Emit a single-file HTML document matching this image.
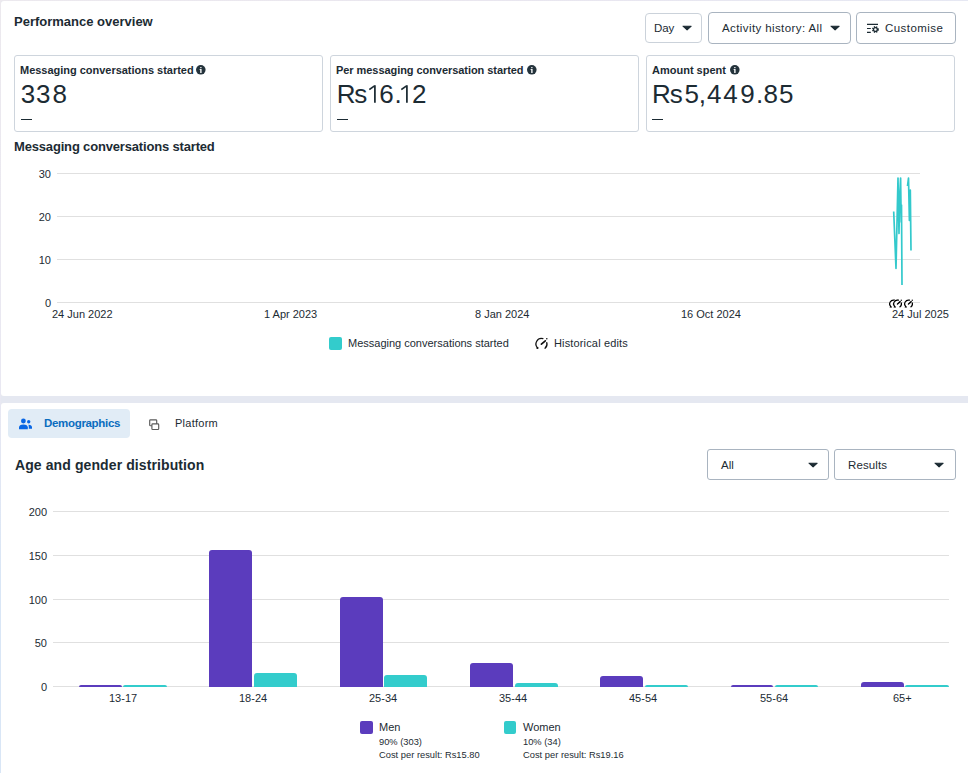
<!DOCTYPE html>
<html><head><meta charset="utf-8">
<style>
*{margin:0;padding:0;box-sizing:border-box}
html,body{width:968px;height:773px;overflow:hidden;background:#e8e9ef;font-family:"Liberation Sans",sans-serif;color:#1c2b33}
.abs{position:absolute}
.card{position:absolute;background:#fff;border-radius:3px}
.t{position:absolute;white-space:nowrap;line-height:1}
.btn{position:absolute;border:1px solid #a9b4c0;border-radius:4px;background:#fff}
.mc{position:absolute;border:1px solid #ced5dd;border-radius:3px;background:#fff}
.grid{position:absolute;height:1px;background:#e0e0e0}
.yl{position:absolute;font-size:11px;line-height:1;text-align:right;width:30px}
.xl{position:absolute;font-size:11px;line-height:1;white-space:nowrap}
.v{position:absolute;top:81px;font-size:26px;line-height:1;white-space:nowrap}
.bar{position:absolute;border-radius:3px 3px 0 0}
.p{background:#5b3cbd}
.g{background:#33cccc}
</style></head><body>
<svg width="0" height="0" style="position:absolute"><defs><symbol id="gauge" viewBox="0 0 14 13">
<circle cx="6.5" cy="7" r="6.2" fill="#fff"/>
<path d="M2.6 10.9A5.5 5.5 0 0 1 7.9 1.7" fill="none" stroke="#111" stroke-width="1.3" stroke-linecap="round"/>
<path d="M11.8 5.6A5.5 5.5 0 0 1 10 11.2" fill="none" stroke="#111" stroke-width="1.3" stroke-linecap="round"/>
<path d="M6.4 7.1L10.3 3.8" stroke="#111" stroke-width="1.7" stroke-linecap="round"/>
<circle cx="11.8" cy="1.8" r="0.8" fill="#111"/>
<circle cx="2.4" cy="11" r="1.1" fill="#111"/>
</symbol>
<symbol id="gauge2" viewBox="0 0 14 13">
<circle cx="6.5" cy="7" r="6.4" fill="#fff"/>
<path d="M2.6 10.9A5.5 5.5 0 0 1 7.9 1.7" fill="none" stroke="#000" stroke-width="1.8" stroke-linecap="round"/>
<path d="M11.8 5.6A5.5 5.5 0 0 1 10 11.2" fill="none" stroke="#000" stroke-width="1.8" stroke-linecap="round"/>
<path d="M6.4 7.1L10.3 3.8" stroke="#000" stroke-width="2" stroke-linecap="round"/>
<circle cx="11.8" cy="1.8" r="1" fill="#000"/>
<path d="M0.8 12.3L2.2 9.5L4.6 12.3z" fill="#000"/>
</symbol></defs></svg>
<div class="abs" style="left:0;top:0;width:968px;height:1px;background:linear-gradient(90deg,#ece9ee,#e9e6ef 50%,#e6e8f3)"></div>
<div class="abs" style="left:0;top:0;width:1px;height:773px;background:linear-gradient(180deg,#ece9ee,#e9e8f2 50%,#d9e6f6 75%,#d9e6f6)"></div>
<!-- top card -->
<div class="card" style="left:1px;top:1px;width:975px;height:395px"></div>
<!-- bottom card -->
<div class="card" style="left:1px;top:403px;width:975px;height:380px"></div>
<div class="abs" style="left:1px;top:396px;width:967px;height:7px;background:#e5e8f1"></div>

<div class="t" style="left:14px;top:15px;font-size:13px;font-weight:bold">Performance overview</div>

<!-- buttons -->
<div class="btn" style="left:645px;top:13px;width:57px;height:30px;border-color:#cbd2da"></div>
<div class="t" style="left:654px;top:23px;font-size:11.5px;letter-spacing:-0.1px">Day</div>
<svg class="abs" style="left:682px;top:25px" width="10" height="6" viewBox="0 0 10 6"><path d="M1 1.2H9.2L5.1 4.9z" fill="#1c2b33" stroke="#1c2b33" stroke-width="1.1" stroke-linejoin="round"/></svg>

<div class="btn" style="left:708px;top:12px;width:143px;height:32px"></div>
<div class="t" style="left:722px;top:23px;font-size:11.5px;letter-spacing:0.4px">Activity history: All</div>
<svg class="abs" style="left:830px;top:25px" width="10" height="6" viewBox="0 0 10 6"><path d="M1 1.2H9.2L5.1 4.9z" fill="#1c2b33" stroke="#1c2b33" stroke-width="1.1" stroke-linejoin="round"/></svg>

<div class="btn" style="left:856px;top:12px;width:100px;height:32px"></div>
<svg class="abs" style="left:866px;top:22px" width="14" height="12" viewBox="0 0 14 12">
<path d="M1 2.4h11M1 6.5h3.8M1 10.4h3.8" stroke="#1c2b33" stroke-width="1.2"/>
<circle cx="9.4" cy="7.5" r="2.6" fill="none" stroke="#1c2b33" stroke-width="1.6" stroke-dasharray="1.2 0.9"/>
<circle cx="9.4" cy="7.5" r="1.9" fill="none" stroke="#1c2b33" stroke-width="1.3"/>
</svg>
<div class="t" style="left:885px;top:23px;font-size:11.5px;letter-spacing:0.45px">Customise</div>

<!-- metric cards -->
<div class="mc" style="left:14px;top:55px;width:309px;height:77px"></div>
<div class="t" style="left:20px;top:65px;font-size:11px;font-weight:bold;letter-spacing:-0.02px">Messaging conversations started</div>
<svg class="abs" style="left:196.3px;top:65px" width="9.6" height="9.6" viewBox="0 0 10 10"><circle cx="5" cy="5" r="5" fill="#24333c"/><path d="M3.7 4.1H5.8V8.3H4.4V5H3.7z" fill="#fff"/><rect x="4.35" y="2" width="1.45" height="1.35" rx="0.4" fill="#fff"/></svg>
<div class="abs" style="left:21px;top:119px;width:11px;height:1px;background:#1c2b33"></div>

<div class="mc" style="left:330px;top:55px;width:309px;height:77px"></div>
<div class="t" style="left:336px;top:65px;font-size:11px;font-weight:bold;letter-spacing:-0.06px">Per messaging conversation started</div>
<svg class="abs" style="left:527px;top:65px" width="9.6" height="9.6" viewBox="0 0 10 10"><circle cx="5" cy="5" r="5" fill="#24333c"/><path d="M3.7 4.1H5.8V8.3H4.4V5H3.7z" fill="#fff"/><rect x="4.35" y="2" width="1.45" height="1.35" rx="0.4" fill="#fff"/></svg>
<div class="abs" style="left:337px;top:119px;width:11px;height:1px;background:#1c2b33"></div>

<div class="mc" style="left:646px;top:55px;width:309px;height:77px"></div>
<div class="t" style="left:652px;top:65px;font-size:11px;font-weight:bold">Amount spent</div>
<svg class="abs" style="left:730.3px;top:65px" width="9.6" height="9.6" viewBox="0 0 10 10"><circle cx="5" cy="5" r="5" fill="#24333c"/><path d="M3.7 4.1H5.8V8.3H4.4V5H3.7z" fill="#fff"/><rect x="4.35" y="2" width="1.45" height="1.35" rx="0.4" fill="#fff"/></svg>
<div class="abs" style="left:652px;top:119px;width:11px;height:1px;background:#1c2b33"></div>

<div class="t" style="left:14px;top:140px;font-size:13px;font-weight:bold;letter-spacing:-0.17px">Messaging conversations started</div>

<!-- values -->
<div class="v" style="left:20.7px">3</div>
<div class="v" style="left:36.0px">3</div>
<div class="v" style="left:52.6px">8</div>
<div class="v" style="left:336.8px">R</div>
<div class="v" style="left:354.2px">s</div>
<svg class="abs" style="left:368.9px;top:84px" width="10" height="20" viewBox="0 0 10 20"><path d="M0.3 5.6L5.9 1.6M5.9 1.2V18.8" fill="none" stroke="#1c2b33" stroke-width="1.75"/></svg>
<div class="v" style="left:379.3px">6</div>
<div class="v" style="left:394.6px">.</div>
<svg class="abs" style="left:401.1px;top:84px" width="10" height="20" viewBox="0 0 10 20"><path d="M0.3 5.6L5.9 1.6M5.9 1.2V18.8" fill="none" stroke="#1c2b33" stroke-width="1.75"/></svg>
<div class="v" style="left:412.1px">2</div>
<div class="v" style="left:651.9px">R</div>
<div class="v" style="left:669.7px">s</div>
<div class="v" style="left:684.5px">5</div>
<div class="v" style="left:698.8px">,</div>
<div class="v" style="left:707.0px">4</div>
<div class="v" style="left:723.2px">4</div>
<div class="v" style="left:740.3px">9</div>
<div class="v" style="left:756.1px">.</div>
<div class="v" style="left:763.5px">8</div>
<div class="v" style="left:778.9px">5</div>
<!-- line chart -->
<div class="grid" style="left:57px;top:173px;width:863px"></div>
<div class="grid" style="left:57px;top:216px;width:863px"></div>
<div class="grid" style="left:57px;top:259px;width:863px"></div>
<div class="grid" style="left:57px;top:302px;width:863px"></div>
<div class="yl" style="left:21px;top:169px">30</div>
<div class="yl" style="left:21px;top:212px">20</div>
<div class="yl" style="left:21px;top:255px">10</div>
<div class="yl" style="left:21px;top:298px">0</div>
<div class="xl" style="left:52px;top:309px">24 Jun 2022</div>
<div class="xl" style="left:264px;top:309px">1 Apr 2023</div>
<div class="xl" style="left:475px;top:309px">8 Jan 2024</div>
<div class="xl" style="left:681px;top:309px">16 Oct 2024</div>
<div class="xl" style="left:892px;top:309px">24 Jul 2025</div>
<svg class="abs" style="left:880px;top:165px" width="50" height="150" viewBox="880 165 50 150">
<polyline points="893.7,211.5 896,268.5 898,178 899,233.5 899.6,198 900.6,178 901.2,222 901.5,205 902,285" fill="none" stroke="#33c9cc" stroke-width="1.7" stroke-linejoin="round"/>
<polyline points="907.5,186 908.5,178 909.4,220.5 910.3,190 911,250.5" fill="none" stroke="#33c9cc" stroke-width="1.7" stroke-linejoin="round"/>
</svg>
<svg class="abs" style="left:889.4px;top:298.6px" width="9.8" height="9.1" viewBox="0 0 14 13"><use href="#gauge2"/></svg>
<svg class="abs" style="left:892.7px;top:298.6px" width="9.8" height="9.1" viewBox="0 0 14 13"><use href="#gauge2"/></svg>
<svg class="abs" style="left:903.7px;top:298.6px" width="9.8" height="9.1" viewBox="0 0 14 13"><use href="#gauge2"/></svg>
<div class="abs" style="left:329px;top:337px;width:13px;height:13px;background:#33cccc;border-radius:2px"></div>
<div class="xl" style="left:348px;top:338px">Messaging conversations started</div>
<svg class="abs" style="left:535px;top:337px" width="14" height="13" viewBox="0 0 14 13"><use href="#gauge"/></svg>
<div class="xl" style="left:554px;top:338px;letter-spacing:0.15px">Historical edits</div>

<!-- bottom section -->
<div class="abs" style="left:8px;top:409px;width:122px;height:29px;background:#e1ecf6;border-radius:4px"></div>
<svg class="abs" style="left:18px;top:418px" width="15" height="12" viewBox="0 0 15 12">
<circle cx="5.4" cy="3" r="2.4" fill="#0866e4"/>
<path d="M1 11.2V9.3C1 7.6 2.6 6.5 5.4 6.5S9.8 7.6 9.8 9.3V11.2z" fill="#0866e4"/>
<circle cx="10.7" cy="3.7" r="1.7" fill="#0866e4"/>
<path d="M10.4 6.8C12.6 6.7 14 7.7 14 9.3V10.8H10.8V9.3C10.8 8.2 10.6 7.4 10.4 6.8z" fill="#0866e4"/>
</svg>
<div class="t" style="left:44px;top:418px;font-size:11.5px;font-weight:bold;color:#0a6dbf;letter-spacing:-0.32px">Demographics</div>
<svg class="abs" style="left:148px;top:418px" width="12" height="13" viewBox="0 0 12 13">
<rect x="1.7" y="1.8" width="7" height="5.9" rx="0.8" fill="none" stroke="#5a5a5a" stroke-width="1.15"/>
<rect x="3.9" y="5.9" width="6.8" height="5.6" rx="0.8" fill="#fff" stroke="#5a5a5a" stroke-width="1.15"/>
</svg>
<div class="t" style="left:175px;top:418px;font-size:11px;letter-spacing:0.25px">Platform</div>

<div class="t" style="left:15px;top:458px;font-size:14px;font-weight:bold;letter-spacing:0.1px">Age and gender distribution</div>

<div class="btn" style="left:707px;top:449px;width:122px;height:31px;border-radius:3px"></div>
<div class="t" style="left:721px;top:460px;font-size:11.5px">All</div>
<svg class="abs" style="left:808px;top:462px" width="10" height="6" viewBox="0 0 10 6"><path d="M1 1.2H9.2L5.1 4.9z" fill="#1c2b33" stroke="#1c2b33" stroke-width="1.1" stroke-linejoin="round"/></svg>
<div class="btn" style="left:834px;top:449px;width:122px;height:31px;border-radius:3px"></div>
<div class="t" style="left:848px;top:460px;font-size:11.5px;letter-spacing:0.1px">Results</div>
<svg class="abs" style="left:934px;top:462px" width="10" height="6" viewBox="0 0 10 6"><path d="M1 1.2H9.2L5.1 4.9z" fill="#1c2b33" stroke="#1c2b33" stroke-width="1.1" stroke-linejoin="round"/></svg>

<!-- bar chart -->
<div class="grid" style="left:53px;top:511px;width:896px"></div>
<div class="grid" style="left:53px;top:555px;width:896px"></div>
<div class="grid" style="left:53px;top:599px;width:896px"></div>
<div class="grid" style="left:53px;top:642px;width:896px"></div>
<div class="grid" style="left:53px;top:686px;width:896px"></div>
<div class="yl" style="left:17px;top:507px">200</div>
<div class="yl" style="left:17px;top:551px">150</div>
<div class="yl" style="left:17px;top:595px">100</div>
<div class="yl" style="left:17px;top:638px">50</div>
<div class="yl" style="left:17px;top:682px">0</div>

<div class="bar p" style="left:79px;top:685px;width:43px;height:2px"></div>
<div class="bar g" style="left:123px;top:685px;width:44px;height:2px"></div>
<div class="bar p" style="left:209px;top:550px;width:43px;height:137px"></div>
<div class="bar g" style="left:254px;top:673px;width:43px;height:14px"></div>
<div class="bar p" style="left:340px;top:597px;width:43px;height:90px"></div>
<div class="bar g" style="left:384px;top:675px;width:43px;height:12px"></div>
<div class="bar p" style="left:470px;top:663px;width:43px;height:24px"></div>
<div class="bar g" style="left:515px;top:683px;width:43px;height:4px"></div>
<div class="bar p" style="left:600px;top:676px;width:43px;height:11px"></div>
<div class="bar g" style="left:645px;top:685px;width:43px;height:2px"></div>
<div class="bar p" style="left:731px;top:685px;width:42px;height:2px"></div>
<div class="bar g" style="left:775px;top:685px;width:43px;height:2px"></div>
<div class="bar p" style="left:861px;top:682px;width:43px;height:5px"></div>
<div class="bar g" style="left:905px;top:685px;width:44px;height:2px"></div>

<div class="xl" style="left:109px;top:693px">13-17</div>
<div class="xl" style="left:239px;top:693px">18-24</div>
<div class="xl" style="left:369px;top:693px">25-34</div>
<div class="xl" style="left:499px;top:693px">35-44</div>
<div class="xl" style="left:629px;top:693px">45-54</div>
<div class="xl" style="left:760px;top:693px">55-64</div>
<div class="xl" style="left:893px;top:693px">65+</div>

<div class="abs" style="left:360px;top:721px;width:13px;height:13px;background:#5b3cbd;border-radius:2px"></div>
<div class="xl" style="left:379px;top:722px;font-size:11px">Men</div>
<div class="xl" style="left:379px;top:738px;font-size:9.3px">90% (303)</div>
<div class="xl" style="left:379px;top:750.5px;font-size:9.3px;letter-spacing:0.02px">Cost per result: Rs15.80</div>
<div class="abs" style="left:504px;top:721px;width:12px;height:13px;background:#33cccc;border-radius:2px"></div>
<div class="xl" style="left:523px;top:722px;font-size:11px">Women</div>
<div class="xl" style="left:523px;top:738px;font-size:9.3px">10% (34)</div>
<div class="xl" style="left:523px;top:750.5px;font-size:9.3px;letter-spacing:0.02px">Cost per result: Rs19.16</div>

</body></html>
